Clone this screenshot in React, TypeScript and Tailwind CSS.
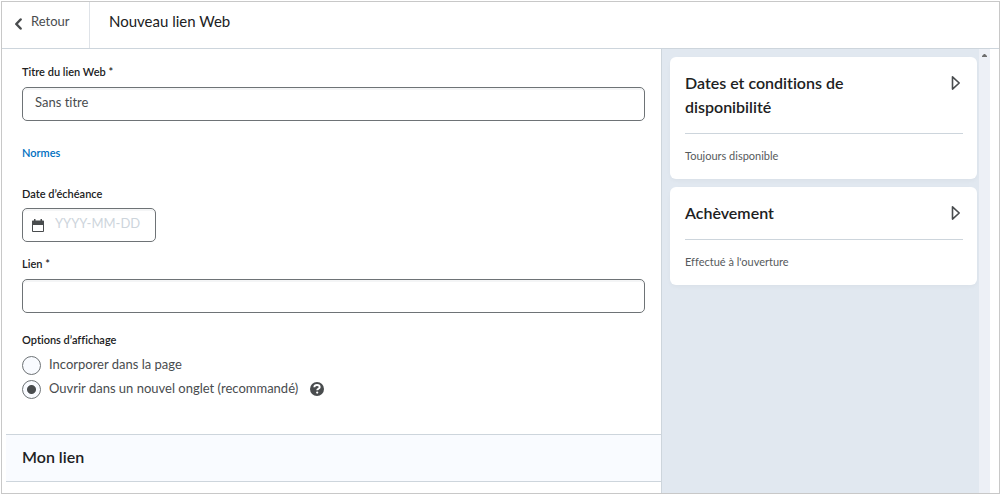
import React from 'react';

function ArrowIcon() {
  return (
    <svg width="10" height="16" viewBox="0 0 10 16" fill="none" aria-hidden="true">
      <path
        d="M1.5 1.9v12.2L8.2 8z"
        stroke="#494c4e"
        strokeWidth="1.6"
        strokeLinejoin="round"
      />
    </svg>
  );
}

function Card({ title, summary }: { title: string; summary: string }) {
  return (
    <section className="rounded-md bg-white pt-3.5 pr-3.5 pb-[15px] pl-[15px] shadow-[0_2px_4px_rgba(0,0,0,0.03)]">
      <div className="flex items-start justify-between">
        <h2 className="max-w-[200px] text-base leading-6 font-semibold text-[#202122]">
          {title}
        </h2>
        <button type="button" aria-label={title} className="mt-1 mr-0.5">
          <ArrowIcon />
        </button>
      </div>
      <p className="mt-3.5 border-t border-[#cdd5dc] pt-3.5 text-[11px] leading-4 text-[#565a5c]">
        {summary}
      </p>
    </section>
  );
}

const labelClass = 'block text-[11px] leading-4 font-semibold text-[#202122]';
const inputClass =
  'block h-[34px] w-full rounded-[5px] border border-[#6e7376] bg-white px-3 pb-1 text-[13px] text-[#494c4e] shadow-[inset_0_2px_0_rgba(181,189,194,0.15)]';
const radioClass =
  'size-[19px] shrink-0 appearance-none rounded-full border border-[#6e7376] bg-[#f9fbff] checked:bg-[radial-gradient(circle,#494c4e_4px,#f9fbff_5px)]';

export default function App() {
  return (
    <div className="flex min-h-screen bg-white pt-px pl-px font-['Lato',sans-serif] text-[#494c4e] [font-variant-ligatures:none]">
      <div className="flex grow flex-col border border-[#c8c8c8]">
        <header className="flex h-[47px] items-stretch border-b border-[#cdd5dc]">
          <a
            href="#"
            className="flex w-[88px] items-center gap-2 border-r border-[#dfe3e8] pb-1.5 pl-3 text-[13px]"
          >
            <svg width="9" height="12" viewBox="0 0 9 12" fill="none" className="mt-1" aria-hidden="true">
              <path
                d="M6.6 1.5 2.3 6l4.3 4.5"
                stroke="#494c4e"
                strokeWidth="2.5"
                strokeLinecap="round"
                strokeLinejoin="round"
              />
            </svg>
            Retour
          </a>
          <h1 className="self-center pb-2 pl-[19px] text-[15px] text-[#202122]">Nouveau lien Web</h1>
        </header>

        <div className="flex grow">
          <main className="min-w-0 grow pl-1">
            <form className="px-4 pt-[15px] pb-[33px]">
              <label htmlFor="title" className={labelClass}>
                Titre du lien Web *
              </label>
              <input id="title" defaultValue="Sans titre" className={`mt-[7px] ${inputClass}`} />

              <a href="#" className="mt-6 block text-[11px] leading-4 font-semibold text-[#006fbf]">
                Normes
              </a>

              <label htmlFor="due" className={`mt-[25px] ${labelClass}`}>
                Date d’échéance
              </label>
              <div className="relative mt-1.5 w-[134px]">
                <svg
                  width="12"
                  height="13"
                  viewBox="0 0 12 13"
                  className="absolute top-[11px] left-[10px]"
                  aria-hidden="true"
                >
                  <path
                    fill="#494c4e"
                    fillRule="evenodd"
                    d="M2 0h1.5v1.5h5V0H10v1.5h1.2a.8.8 0 0 1 .8.8v9.8a.9.9 0 0 1-.9.9H.9a.9.9 0 0 1-.9-.9V2.300a.8.8 0 0 1 .8-.8H2zM1 6v6h10V6z"
                  />
                </svg>
                <input
                  id="due"
                  placeholder="YYYY-MM-DD"
                  className={`pl-8 placeholder:text-[#cdd5dc] ${inputClass}`}
                />
              </div>

              <label htmlFor="link" className={`mt-3.5 ${labelClass}`}>
                Lien *
              </label>
              <input id="link" className={`mt-[7px] ${inputClass}`} />

              <fieldset className="mt-[19px]">
                <legend className={`mb-[5px] ${labelClass}`}>Options d’affichage</legend>
                <div className="flex h-6 items-center gap-2">
                  <input id="embed" type="radio" name="display" className={radioClass} />
                  <label htmlFor="embed" className="text-[13px]">
                    Incorporer dans la page
                  </label>
                </div>
                <div className="flex h-6 items-center gap-2">
                  <input id="tab" type="radio" name="display" defaultChecked className={radioClass} />
                  <label htmlFor="tab" className="text-[13px]">
                    Ouvrir dans un nouvel onglet (recommandé)
                  </label>
                  <button type="button" aria-label="Aide" className="ml-1">
                    <svg width="14" height="14" viewBox="0 0 14 14" fill="none">
                      <circle cx="7" cy="7" r="7" fill="#494c4e" />
                      <path
                        d="M4.300 5.300C4.400 3.700 5.600 3 7 3s2.700.8 2.700 2.200c0 1.600-2.500 1.600-2.500 3.100"
                        stroke="#fff"
                        strokeWidth="1.9"
                      />
                      <circle cx="7.2" cy="10.6" r="1.1" fill="#fff" />
                    </svg>
                  </button>
                </div>
              </fieldset>
            </form>

            <div className="border-y border-[#cdd5dc] bg-[#f9fbff] px-4 pt-2.5 pb-3">
              <h2 className="text-base leading-6 font-semibold text-[#202122]">Mon lien</h2>
            </div>
          </main>

          <aside className="mr-[9px] flex w-[329px] shrink-0 border-l border-[#cdd5dc] bg-[#e1e8f0]">
            <div className="flex grow flex-col gap-2 py-2 pr-0.5 pl-2">
              <Card title="Dates et conditions de disponibilité" summary="Toujours disponible" />
              <Card title="Achèvement" summary="Effectué à l'ouverture" />
            </div>
            <div className="flex w-[11px] justify-center bg-[#edf0f6] pt-[5px]">
              <svg width="5" height="3" viewBox="0 0 5 3" aria-hidden="true">
                <path d="M0 3V2l2-2h1l2 2v1z" fill="#6e6e6e" />
              </svg>
            </div>
          </aside>
        </div>
      </div>
    </div>
  );
}
